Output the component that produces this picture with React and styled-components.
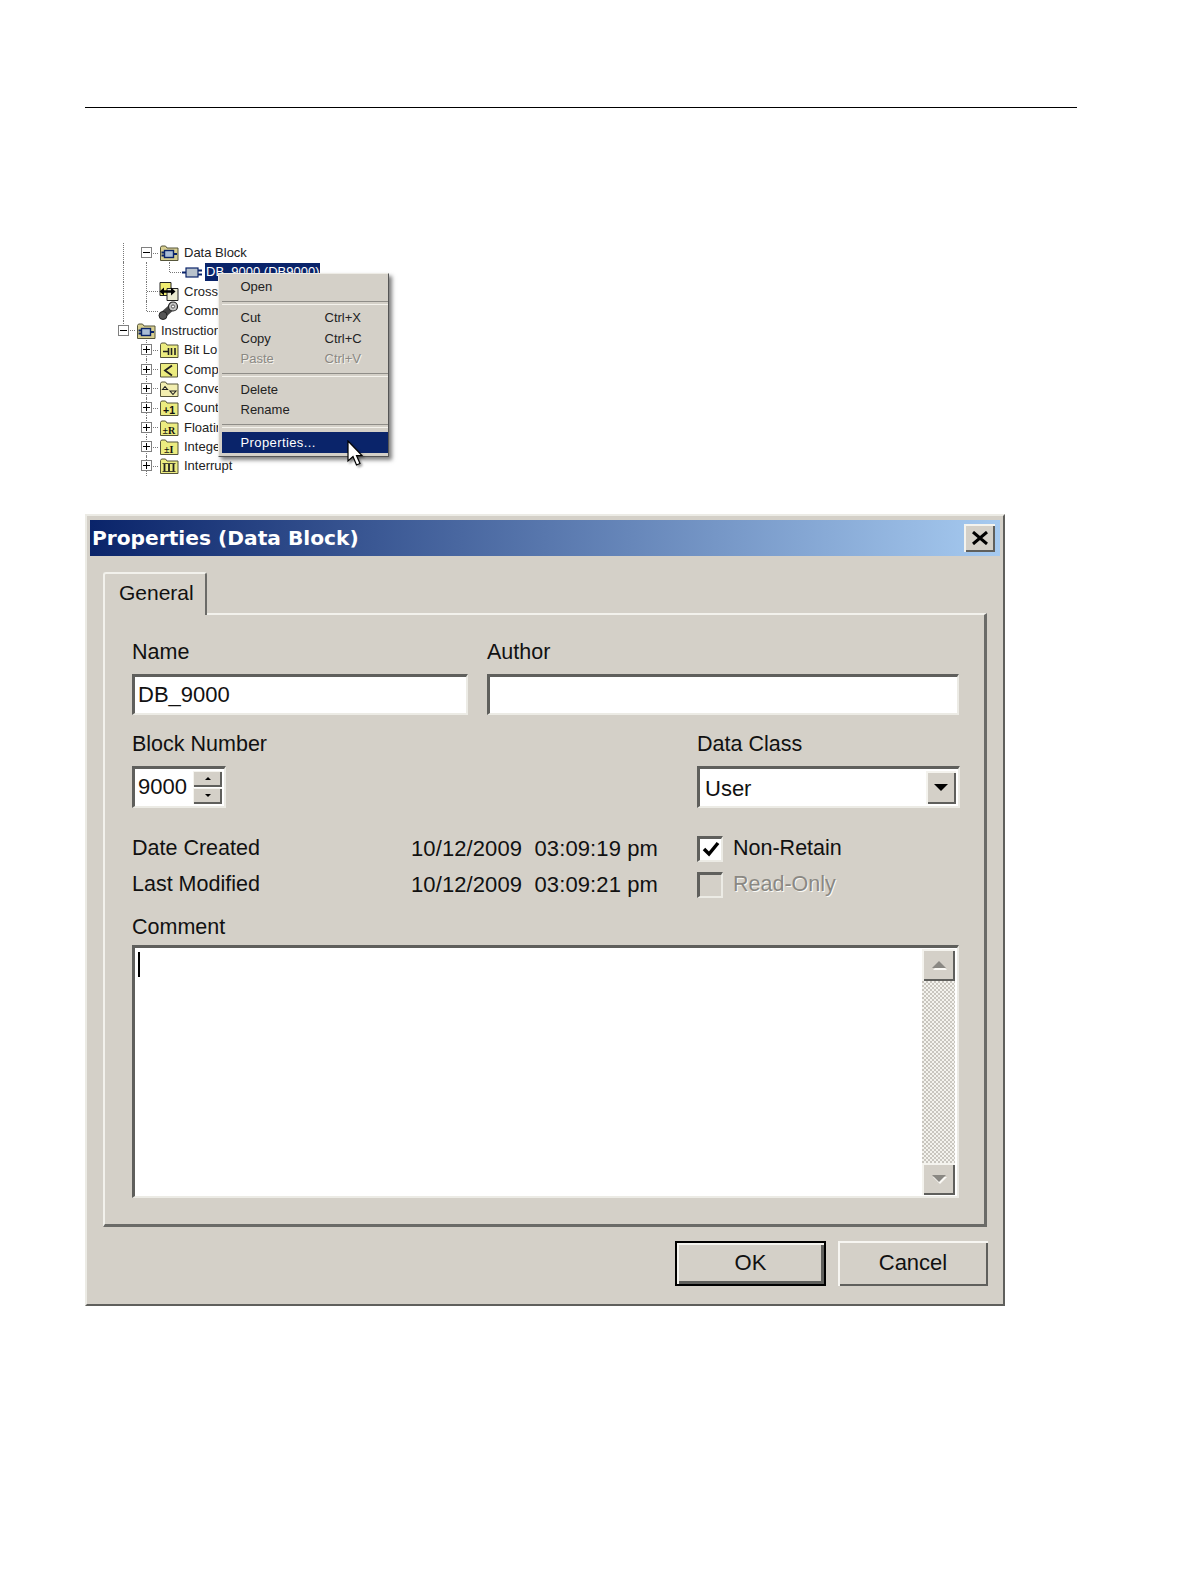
import React from "react";
import styled, { createGlobalStyle } from "styled-components";

const GlobalStyle = createGlobalStyle`
  * { box-sizing: border-box; }
  html, body { margin: 0; background: #fff; }
  body { font-family: "Liberation Sans", Arial, sans-serif; color: #111; }
`;

const Page = styled.div`
  width: 1190px;
  height: 1584px;
  padding-top: 107px;
  overflow: hidden;
`;

const Rule = styled.hr`
  margin: 0 0 0 85px;
  width: 992px;
  height: 1px;
  border: 0;
  background: #000;
`;

/* ---------- tree with context menu ---------- */

const Tree = styled.div`
  position: relative;
  width: 300px;
  margin: 135px 0 38px 112px;
`;

const TreeRow = styled.div`
  display: flex;
  align-items: center;
  height: 19.4px;
  font-size: 13px;
  color: #222;
  white-space: nowrap;
`;

const Cell = styled.div`
  position: relative;
  flex: none;
  width: 23px;
  height: 100%;
  display: flex;
  align-items: center;
  justify-content: center;

  &::before {
    content: "";
    display: ${({ $v }) => ($v ? "block" : "none")};
    position: absolute;
    left: 11px;
    top: ${({ $v }) => ($v === "bottom" ? "50%" : "0")};
    bottom: ${({ $v }) => ($v === "top" ? "50%" : "0")};
    border-left: 1px dotted #777;
  }

  &::after {
    content: "";
    display: ${({ $h }) => ($h ? "block" : "none")};
    position: absolute;
    left: 12px;
    right: 0;
    top: 50%;
    border-top: 1px dotted #777;
  }
`;

const Expander = styled.span`
  position: relative;
  z-index: 1;
  width: 11px;
  height: 11px;
  background: #fff;
  border: 1px solid #808080;

  &::before {
    content: "";
    position: absolute;
    left: 1px;
    right: 1px;
    top: 4px;
    height: 1px;
    background: #000;
  }

  &::after {
    content: "";
    display: ${({ $open }) => ($open ? "none" : "block")};
    position: absolute;
    top: 1px;
    bottom: 1px;
    left: 4px;
    width: 1px;
    background: #000;
  }
`;

const IconBox = styled.svg`
  flex: none;
  width: 23px;
  height: 19px;
  margin-left: -1px;
`;

const TreeLabel = styled.span`
  margin-left: ${({ $selected }) => ($selected ? "2px" : "4px")};
  padding: 0 ${({ $selected }) => ($selected ? "1px" : "0")};
  height: ${({ $selected }) => ($selected ? "18px" : "auto")};
  line-height: ${({ $selected }) => ($selected ? "18px" : "normal")};
  background: ${({ $selected }) => ($selected ? "#0a246a" : "transparent")};
  color: ${({ $selected }) => ($selected ? "#fff" : "inherit")};
`;

const Menu = styled.div`
  position: absolute;
  left: 106px;
  top: 30px;
  width: 171px;
  height: 184px;
  padding: 2px 0 0 3px;
  background: #d4d0c8;
  border-top: 1px solid #eeece6;
  border-left: 1px solid #eeece6;
  border-right: 1px solid #555;
  border-bottom: 1px solid #555;
  box-shadow: 3px 3px 4px rgba(0, 0, 0, 0.5);
  font-size: 13px;
`;

const MenuItem = styled.div`
  display: grid;
  grid-template-columns: 84px 1fr;
  align-items: center;
  height: ${({ $active }) => ($active ? "21px" : "20.5px")};
  padding-left: 18.5px;
  letter-spacing: ${({ $active }) => ($active ? "0.4px" : "0")};
  background: ${({ $active }) => ($active ? "#0a246a" : "transparent")};
  color: ${({ $active, $disabled }) =>
    $active ? "#fff" : $disabled ? "#8a8883" : "#222"};
  text-shadow: ${({ $disabled }) => ($disabled ? "1px 1px 0 #f4f2ec" : "none")};
`;

const MenuSeparator = styled.div`
  height: ${({ $height }) => $height || "10px"};
  padding-top: 4px;

  &::before {
    content: "";
    display: block;
    height: 2px;
    border-top: 1px solid #8f8d88;
    border-bottom: 1px solid #f4f2ec;
  }
`;

const Pointer = styled.svg`
  position: absolute;
  left: 128px;
  top: 166px;
  width: 16px;
  height: 27px;
  filter: drop-shadow(2px 2px 1px rgba(0, 0, 0, 0.35));
`;

const Folder = ({ fill = "#ecec80" }) => (
  <path
    d="M3.5 17.5V4.5l1-1.5h4l1.5 2h11v12.5z"
    fill={fill}
    stroke="#55553a"
    strokeWidth="1"
  />
);

const Chip = () => (
  <>
    <rect x="7.5" y="7.5" width="9" height="7" fill="#a9bdd6" stroke="#0a246a" strokeWidth="1.4" />
    <path d="M4.5 9.5h3M4.5 12.5h3M16.5 11H20" stroke="#0a246a" strokeWidth="2" />
  </>
);

const TreeIcon = ({ kind }) => {
  const glyph = {
    block: (
      <>
        <Folder fill="#d8cf90" />
        <Chip />
      </>
    ),
    chip: (
      <>
        <rect x="6" y="5" width="12" height="9" fill="#b8c2cc" stroke="#0a246a" strokeWidth="1.2" />
        <path d="M2 9.5h4M18 7.5h4M18 11.5h4" stroke="#0a246a" strokeWidth="2" />
      </>
    ),
    cross: (
      <>
        <path d="M3 .5h11v13H3z" fill="#f0ec70" stroke="#222" />
        <path d="M10 6.5h11v12H10z" fill="#ecebd0" stroke="#222" />
        <path d="M5 9.5h11" stroke="#000" strokeWidth="2.5" />
        <path d="M7 5.5L2.5 9.5 7 13.5zM14 5.5l4.5 4-4.5 4z" fill="#000" />
      </>
    ),
    comm: (
      <>
        <path d="M6 14L15 6" stroke="#444" strokeWidth="7" />
        <circle cx="16" cy="5.5" r="4.5" fill="#c4c4c4" stroke="#222" strokeWidth="1.2" />
        <circle cx="16" cy="5.5" r="1.6" fill="#fff" stroke="#333" strokeWidth="0.8" />
        <circle cx="6" cy="14.5" r="4" fill="#555" stroke="#222" />
      </>
    ),
    bit: (
      <>
        <Folder />
        <path d="M6 11.5h5M11.5 8v7M14.5 8v7M18 8v7" stroke="#222" strokeWidth="1.6" />
      </>
    ),
    compare: (
      <>
        <path d="M3.5 3.5h17v13.5h-17z" fill="#ecec80" stroke="#55553a" />
        <path d="M15 5.5L8 10.5l7 5" fill="none" stroke="#222" strokeWidth="1.8" />
      </>
    ),
    convert: (
      <>
        <Folder fill="#f2eeb0" />
        <path d="M5.5 10.5l2.5-3 2.5 3z" fill="none" stroke="#222" strokeWidth="1.1" />
        <path d="M13 12h6l-3 3.5z" fill="none" stroke="#222" strokeWidth="1.1" />
      </>
    ),
    count: (
      <>
        <Folder />
        <text x="6" y="15.5" fontSize="10.5" fontWeight="700" fill="#111" fontFamily="Liberation Sans">+1</text>
      </>
    ),
    float: (
      <>
        <Folder />
        <text x="5.5" y="15.5" fontSize="10" fontWeight="700" fill="#111" fontFamily="Liberation Serif">±R</text>
      </>
    ),
    integer: (
      <>
        <Folder />
        <text x="7" y="15.5" fontSize="10" fontWeight="700" fill="#111" fontFamily="Liberation Serif">±I</text>
      </>
    ),
    interrupt: (
      <>
        <Folder />
        <path d="M7.5 8v7.5M12 8v7.5M16.5 8v7.5" stroke="#222" strokeWidth="1.8" />
        <path d="M5.5 7.5h13M5.5 15.5h13" stroke="#222" strokeWidth="0.8" />
      </>
    ),
  }[kind];
  return <IconBox viewBox="0 0 23 19">{glyph}</IconBox>;
};

// labels as far as they show beside the open menu
const rows = [
  { cells: [{ $v: "full" }, { $h: true, open: true }], icon: "block", label: "Data Block" },
  { cells: [{ $v: "full" }, { $v: "full" }, { $v: "top", $h: true }], icon: "chip", label: "DB_9000 (DB9000)", selected: true },
  { cells: [{ $v: "full" }, { $v: "full", $h: true }], icon: "cross", label: "Cross" },
  { cells: [{ $v: "full" }, { $v: "top", $h: true }], icon: "comm", label: "Comm" },
  { cells: [{ $v: "top", $h: true, open: true }], icon: "block", label: "Instruction" },
  { cells: [{}, { $v: "full", $h: true, closed: true }], icon: "bit", label: "Bit Lo" },
  { cells: [{}, { $v: "full", $h: true, closed: true }], icon: "compare", label: "Comp" },
  { cells: [{}, { $v: "full", $h: true, closed: true }], icon: "convert", label: "Conve" },
  { cells: [{}, { $v: "full", $h: true, closed: true }], icon: "count", label: "Count" },
  { cells: [{}, { $v: "full", $h: true, closed: true }], icon: "float", label: "Floatir" },
  { cells: [{}, { $v: "full", $h: true, closed: true }], icon: "integer", label: "Intege" },
  { cells: [{}, { $v: "full", $h: true, closed: true }], icon: "interrupt", label: "Interrupt" },
];

/* ---------- dialog ---------- */

const Dialog = styled.div`
  display: flex;
  flex-direction: column;
  width: 920px;
  height: 792px;
  margin-left: 85px;
  padding: 4px 3px 3px 3px;
  background: #d4d0c8;
  border: 2px solid;
  border-color: #ecebe5 #5f5f5c #5f5f5c #ecebe5;
`;

const TitleBar = styled.div`
  display: flex;
  align-items: center;
  justify-content: space-between;
  height: 36px;
  padding: 0 5px 0 2px;
  background: linear-gradient(90deg, #0a246a, #a6caf0);
  color: #fff;
  font-family: "DejaVu Sans", sans-serif;
  font-weight: 700;
  font-size: 20.2px;
`;

const raised = `
  background: #d4d0c8;
  box-shadow: inset 2px 2px 0 #f4f3ee, inset -2px -2px 0 #5f5f5c;
`;

const CloseButton = styled.div`
  ${raised}
  display: flex;
  align-items: center;
  justify-content: center;
  width: 31px;
  height: 28px;
`;

const TabStrip = styled.div`
  display: flex;
  margin: 16px 0 0 13px;
`;

const Tab = styled.div`
  position: relative;
  z-index: 1;
  width: 104px;
  height: 43px;
  margin-bottom: -2px;
  padding: 5px 0 0 14px;
  background: #d4d0c8;
  border: 2px solid;
  border-color: #f2f1ec #6b6b68 #d4d0c8 #f2f1ec;
  border-bottom: 0;
  border-top-left-radius: 3px;
  border-top-right-radius: 3px;
  font-size: 21px;
  line-height: 28px;
`;

const Panel = styled.div`
  width: 884px;
  height: 614px;
  margin-left: 13px;
  padding: 24px 25px 0 27px;
  border: 2px solid;
  border-width: 2px 3px 3px 2px;
  border-color: #f2f1ec #6b6b68 #6b6b68 #f2f1ec;
`;

const Label = styled.div`
  height: 26px;
  font-size: 21.5px;
  line-height: 26px;
  white-space: pre;
`;

const FieldRow = styled.div`
  display: grid;
  grid-template-columns: ${({ $columns }) => $columns};
  column-gap: ${({ $gap }) => $gap || "0"};
  margin-top: ${({ $top }) => $top || "0"};
`;

const sunken = `
  background: #fff;
  border: 2px solid;
  border-width: 3px 2px 2px 3px;
  border-color: #5f5f5c #ecebe5 #ecebe5 #5f5f5c;
`;

const Field = styled.div`
  ${sunken}
  height: 41px;
  margin-top: 9px;
  padding-left: 3px;
  font-size: 22px;
  line-height: 34px;
  display: flex;
  align-items: center;
`;

const SpinnerBox = styled(Field)`
  width: 94px;
  height: 42px;
  padding-right: 2px;
  justify-content: space-between;
`;

const SpinButtons = styled.div`
  display: flex;
  flex-direction: column;
  gap: 1px;
`;

const SpinButton = styled.div`
  display: flex;
  align-items: center;
  justify-content: center;
  width: 29px;
  height: 16px;
  background: #d4d0c8;
  box-shadow: inset 1px 1px 0 #f4f3ee, inset -2px -2px 0 #5f5f5c;
`;

const Arrow = styled.span`
  width: 0;
  height: 0;
  border-left: ${({ $size }) => $size}px solid transparent;
  border-right: ${({ $size }) => $size}px solid transparent;
  border-${({ $up }) => ($up ? "bottom" : "top")}: ${({ $size }) => $size}px solid
    ${({ $color }) => $color || "#000"};
`;

const GreyArrow = styled(Arrow)`
  filter: drop-shadow(1px 2px 0 #fbfaf6);
`;

const SelectBox = styled(Field)`
  height: 42px;
  padding-left: 5px;
  padding-right: 2px;
  justify-content: space-between;
`;

const SelectValue = styled.span`
  padding-top: 3px;
`;

const DropButton = styled.div`
  ${raised}
  display: flex;
  align-items: center;
  justify-content: center;
  width: 30px;
  height: 33px;
`;

const InfoRow = styled.div`
  display: grid;
  grid-template-columns: 279px 286px 1fr;
  align-items: center;
  height: 36px;
  font-size: 21.5px;
`;

const InfoGroup = styled.div`
  margin-top: 23px;
`;

const InfoValue = styled.span`
  font-size: 22px;
  letter-spacing: 0.1px;
  white-space: pre;
`;

const CheckRow = styled.div`
  display: flex;
  align-items: center;
  gap: 10px;
  color: ${({ $disabled }) => ($disabled ? "#8a8883" : "#111")};
  text-shadow: ${({ $disabled }) => ($disabled ? "1px 1px 0 #fbfaf6" : "none")};
`;

const CheckBox = styled.span`
  ${sunken}
  display: flex;
  align-items: center;
  justify-content: center;
  flex: none;
  width: 26px;
  height: 26px;
  background: ${({ $disabled }) => ($disabled ? "#d4d0c8" : "#fff")};
`;

const CommentBox = styled.div`
  ${sunken}
  display: flex;
  justify-content: space-between;
  height: 253px;
  margin-top: 5px;
`;

const Caret = styled.span`
  width: 2px;
  height: 25px;
  margin: 4px 0 0 3px;
  background: #000;
`;

const ScrollBar = styled.div`
  display: flex;
  flex-direction: column;
  width: 33px;
  margin: 1px 2px 1px 0;
  background: conic-gradient(#f4f3ee 25%, #c9c6bf 0 50%, #f4f3ee 0 75%, #c9c6bf 0) 0 0 / 4px 4px;
`;

const ScrollButton = styled.div`
  ${raised}
  display: flex;
  align-items: center;
  justify-content: center;
  flex: none;
  height: 32px;
`;

const ScrollTrack = styled.div`
  flex: 1;
`;

const Footer = styled.div`
  display: flex;
  justify-content: flex-end;
  gap: 12px;
  width: 898px;
  margin-top: 14px;
`;

const Button = styled.div`
  display: flex;
  align-items: center;
  justify-content: center;
  width: ${({ $default }) => ($default ? "151px" : "150px")};
  height: 45px;
  background: #d4d0c8;
  font-size: 22px;
  border: ${({ $default }) => ($default ? "2px solid #000" : "0")};
  box-shadow: ${({ $default }) =>
    $default
      ? "inset 2px 2px 0 #f4f3ee, inset -3px -3px 0 #5f5f5c"
      : "inset 2px 2px 0 #f7f6f2, inset -2px -2px 0 #5f5f5c"};
`;

export default function App() {
  return (
    <Page>
      <GlobalStyle />
      <Rule />

      <Tree>
        {rows.map((row) => (
          <TreeRow key={row.label}>
            {row.cells.map(({ open, closed, ...lines }, i) => (
              <Cell key={i} {...lines}>
                {(open || closed) && <Expander $open={open} />}
              </Cell>
            ))}
            <TreeIcon kind={row.icon} />
            <TreeLabel $selected={row.selected}>{row.label}</TreeLabel>
          </TreeRow>
        ))}

        <Menu>
          <MenuItem><span>Open</span></MenuItem>
          <MenuSeparator $height="11px" />
          <MenuItem><span>Cut</span><span>Ctrl+X</span></MenuItem>
          <MenuItem><span>Copy</span><span>Ctrl+C</span></MenuItem>
          <MenuItem $disabled><span>Paste</span><span>Ctrl+V</span></MenuItem>
          <MenuSeparator />
          <MenuItem><span>Delete</span></MenuItem>
          <MenuItem><span>Rename</span></MenuItem>
          <MenuSeparator $height="12px" />
          <MenuItem $active><span>Properties...</span></MenuItem>
          <Pointer viewBox="0 0 16 27">
            <path d="M1 1v20l5-4.5 3.5 8.5 3.5-1.5-3.5-8H15z" fill="#fff" stroke="#000" strokeWidth="1.2" />
          </Pointer>
        </Menu>
      </Tree>

      <Dialog>
        <TitleBar>
          <span>Properties (Data Block)</span>
          <CloseButton>
            <svg width="18" height="14" viewBox="0 0 18 14">
              <path d="M2 1l14 12M16 1L2 13" stroke="#000" strokeWidth="3" />
            </svg>
          </CloseButton>
        </TitleBar>

        <TabStrip>
          <Tab>General</Tab>
        </TabStrip>

        <Panel>
          <FieldRow $columns="336px 472px" $gap="19px">
            <div>
              <Label>Name</Label>
              <Field>DB_9000</Field>
            </div>
            <div>
              <Label>Author</Label>
              <Field />
            </div>
          </FieldRow>

          <FieldRow $columns="565px 263px" $top="16px">
            <div>
              <Label>Block Number</Label>
              <SpinnerBox>
                <span>9000</span>
                <SpinButtons>
                  <SpinButton><Arrow $up $size={3} /></SpinButton>
                  <SpinButton><Arrow $size={3} /></SpinButton>
                </SpinButtons>
              </SpinnerBox>
            </div>
            <div>
              <Label>Data Class</Label>
              <SelectBox>
                <SelectValue>User</SelectValue>
                <DropButton><Arrow $size={7} /></DropButton>
              </SelectBox>
            </div>
          </FieldRow>

          <InfoGroup>
            <InfoRow>
              <span>Date Created</span>
              <InfoValue>10/12/2009  03:09:19 pm</InfoValue>
              <CheckRow>
                <CheckBox>
                  <svg width="18" height="16" viewBox="0 0 18 16">
                    <path d="M2 8l5 5 9-11" fill="none" stroke="#000" strokeWidth="3.5" />
                  </svg>
                </CheckBox>
                Non-Retain
              </CheckRow>
            </InfoRow>
            <InfoRow>
              <span>Last Modified</span>
              <InfoValue>10/12/2009  03:09:21 pm</InfoValue>
              <CheckRow $disabled>
                <CheckBox $disabled />
                Read-Only
              </CheckRow>
            </InfoRow>
          </InfoGroup>

          <FieldRow $columns="1fr" $top="11px">
            <Label>Comment</Label>
            <CommentBox>
              <Caret />
              <ScrollBar>
                <ScrollButton><GreyArrow $up $size={7} $color="#8a8883" /></ScrollButton>
                <ScrollTrack />
                <ScrollButton><GreyArrow $size={7} $color="#8a8883" /></ScrollButton>
              </ScrollBar>
            </CommentBox>
          </FieldRow>
        </Panel>

        <Footer>
          <Button $default>OK</Button>
          <Button>Cancel</Button>
        </Footer>
      </Dialog>
    </Page>
  );
}
